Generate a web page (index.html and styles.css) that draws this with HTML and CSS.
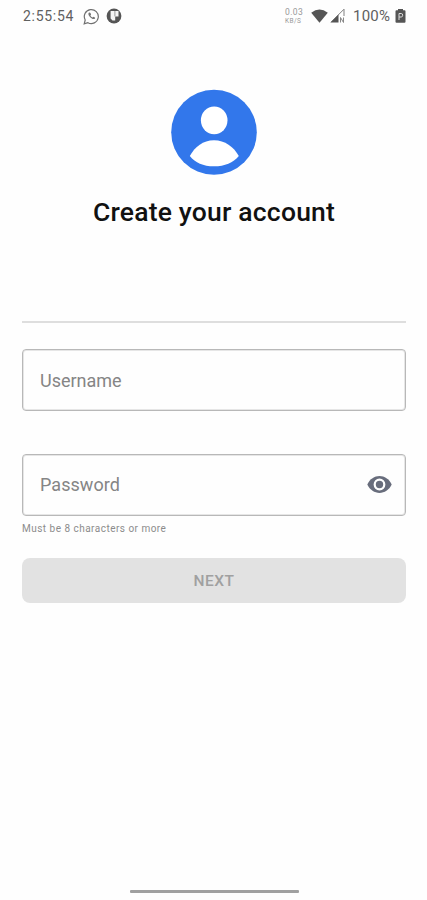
FILE: index.html
```html
<!DOCTYPE html>
<html lang="en">
<head>
<meta charset="utf-8">
<meta name="viewport" content="width=device-width, initial-scale=1">
<title>Create your account</title>
<link rel="stylesheet" href="styles.css">
</head>
<body>
<div class="screen">
  <header class="status">
    <span class="clock">2:55:54</span>
    <svg class="whatsapp" width="17" height="17" viewBox="0 0 17 17" fill="none" stroke="#707070">
      <path d="M1.2 15.8l1-3.8a7 7 0 1 1 2.700 2.700z" stroke-width="1.200"/>
      <path d="M5.800 4.700c-2 2 3.500 7.800 6 6 .8-.8.3-1.300-1.300-2l-1 .9c-1-.4-1.700-1.200-2.100-2.200l.7-.9c-.5-1.500-1-2.500-2.300-1.800z" fill="#747474" stroke="none"/>
    </svg>
    <svg class="app" width="16" height="16" viewBox="0 0 16 16">
      <circle cx="8" cy="8" r="7.400" fill="#555"/>
      <path d="M4.600 3h7.900v5.400H9.200v4.100H6.500L4.600 10.500z" fill="#f4f4f4"/>
      <path d="M8.900 3v5.400" stroke="#999"/>
    </svg>
    <span class="rate"><span>0.03</span><span>KB/S</span></span>
    <svg class="wifi" width="17" height="14" viewBox="0 0 17 14"><path d="M.2 3.700Q8.500-2.800 16.800 3.700L8.500 13.700z" fill="#555"/></svg>
    <svg class="signal" width="16" height="16" viewBox="0 0 16 16">
      <path d="M1 14.200L14 1.200V8" fill="none" stroke="#808080"/>
      <path d="M.5 14.500L8.500 6.500v8z" fill="#555"/>
      <path d="M10.500 14.500V9.500l3 5v-5" fill="none" stroke="#888"/>
    </svg>
    <span class="charge">100%</span>
    <svg class="battery" width="11" height="16" viewBox="0 0 11 16">
      <path d="M3 1h5v1.200h1.500q1 0 1 1v10.500q0 1-1 1h-8q-1 0-1-1V3.200q0-1 1-1H3z" fill="#555"/>
      <path d="M4 12V5.500h2.200q1.500 0 1.500 1.700T6.200 9H4" fill="none" stroke="#ddd"/>
    </svg>
  </header>

  <main class="content">
    <svg class="avatar" width="86" height="86" viewBox="0 0 86 86">
      <ellipse cx="43" cy="43.300" rx="42.800" ry="42.500" fill="#3277eb"/>
      <ellipse cx="43.200" cy="31.300" rx="13.300" ry="13.900" fill="#fff"/>
      <path d="M18.800 67C24 57.800 32 51.300 43 51.300s19.500 6.500 24.800 15.700C62 73.800 54 77.300 43 77.300s-18.500-3.500-24.200-10.300z" fill="#fff"/>
    </svg>
    <h1 class="title">Create your account</h1>
    <div class="rule"></div>
    <form class="form">
      <div class="field"><span class="label">Username</span></div>
      <div class="field password">
        <span class="label">Password</span>
        <svg class="eye" width="25" height="17" viewBox="0 0 25 17">
          <path d="M.3 8.500C3 3 7.500.1 12.500.1S22 3 24.700 8.500C22 14 17.500 16.900 12.500 16.900S3 14 .3 8.500z" fill="#686d7c"/>
          <circle cx="12.500" cy="8.500" r="4.800" fill="#686d7c" stroke="#fff" stroke-width="2.200"/>
        </svg>
      </div>
      <p class="hint">Must be 8 characters or more</p>
      <button class="next" type="button">NEXT</button>
    </form>
  </main>
  <div class="home"></div>
</div>
</body>
</html>
```
FILE: styles.css
```css
* { box-sizing: border-box; }
body { margin: 0; background: #fefefe; font-family: Roboto, sans-serif; }
.screen { height: 900px; display: flex; flex-direction: column; overflow: hidden; }
.status { height: 32px; flex: none; display: flex; align-items: center; padding: 0 21px 0 23px; color: #606060; }
.status svg { flex: none; }
.clock { font-size: 14px; letter-spacing: 0.7px; width: 60px; white-space: nowrap; }
.app { margin-left: 6px; }
.rate { display: flex; flex-direction: column; margin-left: auto; width: 19px; color: #999; font-size: 8.5px; line-height: 10px; letter-spacing: 0.4px; }
.rate span + span { font-size: 6.5px; line-height: 8px; letter-spacing: 0.4px; }
.wifi { margin-left: 7px; }
.signal { margin-left: 2px; }
.charge { margin-left: 7px; width: 42px; font-size: 15px; letter-spacing: 0.2px; }
.content { padding: 57px 21px 0 22px; display: flex; flex-direction: column; }
.avatar { align-self: center; }
.title { margin: 22px 0 0; text-align: center; font-size: 26.5px; line-height: 30px; font-weight: 500; letter-spacing: 0.2px; color: #111; }
.rule { height: 2px; margin-top: 94px; background: #dedede; }
.form { margin-top: 26px; display: flex; flex-direction: column; }
.field { height: 62px; border: 1px solid #b8b8b8; box-shadow: inset 0 0 0 1px #e6e6e6; border-radius: 4px; display: flex; align-items: center; justify-content: space-between; padding: 0 13px 0 17px; }
.password { margin-top: 43px; padding-bottom: 1px; }
.label { font-size: 18px; color: #858585; }
.password .label { letter-spacing: 0.05px; }
.hint { margin: 6px 0 0; font-size: 10px; line-height: 13px; letter-spacing: 0.48px; color: #8c8c8c; }
.next { margin-top: 23px; height: 45px; padding: 1px 0 0; border: 0; border-radius: 8px; background: #e2e2e2; color: #a0a0a0; font: 500 15.5px Roboto, sans-serif; letter-spacing: 0.5px; }
.home { width: 169px; height: 3px; margin: auto auto 7px 130px; background: #a0a0a0; border-radius: 1px; }
```
